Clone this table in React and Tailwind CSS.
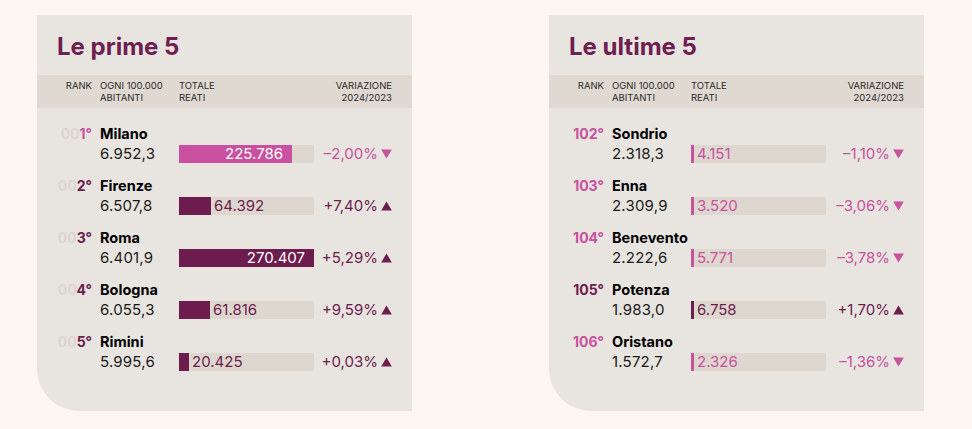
const MAX = 270407;

const TOP = [
  { pad: '00', rank: '1°', name: 'Milano', rate: '6.952,3', total: 225786, label: '225.786', change: '–2,00%', up: false },
  { pad: '00', rank: '2°', name: 'Firenze', rate: '6.507,8', total: 64392, label: '64.392', change: '+7,40%', up: true },
  { pad: '00', rank: '3°', name: 'Roma', rate: '6.401,9', total: 270407, label: '270.407', change: '+5,29%', up: true },
  { pad: '00', rank: '4°', name: 'Bologna', rate: '6.055,3', total: 61816, label: '61.816', change: '+9,59%', up: true },
  { pad: '00', rank: '5°', name: 'Rimini', rate: '5.995,6', total: 20425, label: '20.425', change: '+0,03%', up: true },
];

const BOTTOM = [
  { pad: '', rank: '102°', name: 'Sondrio', rate: '2.318,3', total: 4151, label: '4.151', change: '–1,10%', up: false },
  { pad: '', rank: '103°', name: 'Enna', rate: '2.309,9', total: 3520, label: '3.520', change: '–3,06%', up: false },
  { pad: '', rank: '104°', name: 'Benevento', rate: '2.222,6', total: 5771, label: '5.771', change: '–3,78%', up: false },
  { pad: '', rank: '105°', name: 'Potenza', rate: '1.983,0', total: 6758, label: '6.758', change: '+1,70%', up: true },
  { pad: '', rank: '106°', name: 'Oristano', rate: '1.572,7', total: 2326, label: '2.326', change: '–1,36%', up: false },
];

function Triangle({ up }) {
  return (
    <svg width="11" height="10" viewBox="0 0 11 10" className="ml-[3px]" fill="currentColor">
      {up ? <path d="M5.5 0.5 L10.8 9.5 L0.2 9.5 Z" /> : <path d="M0.2 0.5 L10.8 0.5 L5.5 9.5 Z" />}
    </svg>
  );
}

function Bar({ total, label, up }) {
  const w = Math.max(3, Math.round((total / MAX) * 135));
  const inside = w > 90;
  const fill = up ? 'bg-[#6d1c4e]' : 'bg-[#c9519f]';
  const text = up ? 'text-[#6d1c4e]' : 'text-[#c9519f]';
  return (
    <div className="flex h-[18px] w-[135px] bg-[#ddd7cf]">
      {inside ? (
        <div className={`flex h-full items-center justify-end pr-[9px] text-white ${fill}`} style={{ width: w }}>
          {label}
        </div>
      ) : (
        <div className={`h-full shrink-0 ${fill}`} style={{ width: w }} />
      )}
      {!inside && <span className={`pl-[3px] leading-[18px] ${text}`}>{label}</span>}
    </div>
  );
}

function Card({ title, rows }) {
  return (
    <div className="flex h-[396px] w-[375px] flex-col rounded-bl-[42px] bg-[#e8e4df]">
      <h2 className="pl-5 pt-[18px] pb-[14px] text-[24px] font-bold leading-[28px] text-[#6e1e50]">{title}</h2>
      <div className="grid h-[33px] grid-cols-[55px_87px_1fr] items-center bg-[#dfd9d1] pr-5 text-[9.5px] uppercase leading-[12px] text-[#2a2a2a]">
        <div className="self-start pt-[5px] text-right">Rank</div>
        <div className="pl-2">Ogni 100.000<br />abitanti</div>
        <div className="flex justify-between">
          <span>Totale<br />reati</span>
          <span className="text-right">Variazione<br />2024/2023</span>
        </div>
      </div>
      <div className="flex flex-col gap-[14px] pt-[17px]">
        {rows.map((r) => {
          const color = r.up ? 'text-[#6d1c4e]' : 'text-[#c9519f]';
          return (
            <div key={r.name} className="grid grid-cols-[55px_87px_135px_1fr] grid-rows-[18px_18px] gap-y-[2px] pr-5 text-[15px] text-[#1a1a1a]">
              <div className="text-right text-[14px] font-bold leading-[18px]">
                <span className="text-[#ddd6cf]">{r.pad}</span>
                <span className={color}>{r.rank}</span>
              </div>
              <div className="col-span-3 pl-2 text-[14.5px] font-bold leading-[18px] text-black">{r.name}</div>
              <div />
              <div className="pl-2 leading-[18px] tracking-[0.2px]">{r.rate}</div>
              <Bar total={r.total} label={r.label} up={r.up} />
              <div className={`flex items-center justify-end leading-[18px] ${color}`}>
                {r.change}
                <Triangle up={r.up} />
              </div>
            </div>
          );
        })}
      </div>
    </div>
  );
}

export default function App() {
  return (
    <div className="flex h-[429px] w-[972px] gap-[137px] bg-[#fdf6f2] pl-[37px] pt-[15px]" style={{ fontFamily: 'Inter, "Liberation Sans", sans-serif' }}>
      <Card title="Le prime 5" rows={TOP} />
      <Card title="Le ultime 5" rows={BOTTOM} />
    </div>
  );
}
